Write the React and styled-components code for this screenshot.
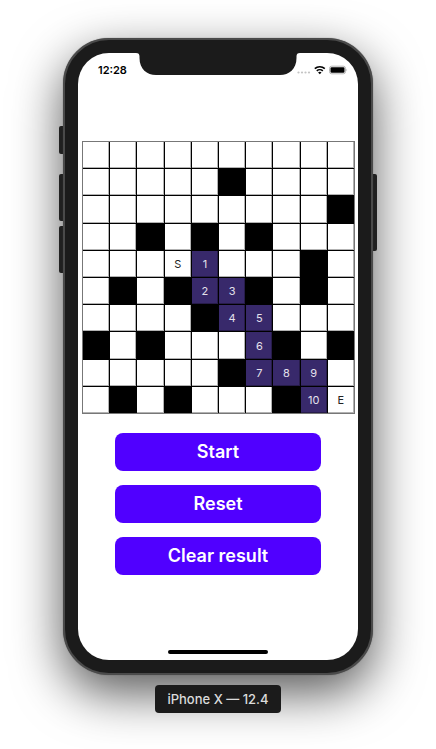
import React from "react";
import styled, { createGlobalStyle } from "styled-components";

const GlobalStyle = createGlobalStyle`
  *, *::before, *::after { box-sizing: border-box; }
  body {
    margin: 0;
    background: #fff;
    font-family: Inter, "Liberation Sans", sans-serif;
  }
`;

const Page = styled.main`
  display: flex;
  flex-direction: column;
  align-items: center;
  gap: 10px;
  padding: 38px 16px 36px;
  overflow: hidden;
`;

const Phone = styled.section`
  position: relative;
  width: 100%;
  max-width: 310px;
  padding: 13px;
  border: 2px solid #4a4a4a;
  border-radius: 46px;
  background: #1b1b1b;
  box-shadow: 0 0 1px #555, 0 18px 50px rgba(0, 0, 0, 0.66);
`;

const SideKey = styled.span`
  position: absolute;
  z-index: -1;
  top: ${(p) => p.$top}px;
  ${(p) => p.$side}: -6px;
  width: 8px;
  height: ${(p) => p.$length}px;
  border-radius: 2px;
  background: #2f2f2f;
`;

const Screen = styled.div`
  position: relative;
  display: flex;
  flex-direction: column;
  border-radius: 31px;
  background: #fff;
`;

const Notch = styled.svg`
  position: absolute;
  top: -1px;
  left: 50%;
  width: 164px;
  height: 23px;
  margin-left: -82px;
`;

const StatusBar = styled.header`
  display: flex;
  align-items: center;
  justify-content: space-between;
  height: 34px;
  padding: 0 10px 0 20px;
`;

const Clock = styled.time`
  font-size: 11px;
  line-height: 16px;
  font-weight: 600;
  color: #000;
`;

const StatusIcons = styled.svg`
  width: 51px;
  height: 10px;
`;

const Board = styled.div`
  display: grid;
  grid-template-columns: repeat(10, 1fr);
  gap: 1px;
  margin: 54px 3px 0 4px;
  border: 1px solid #777;
  background: #000;
`;

const fills = { open: "#fff", wall: "#000", path: "#38296b" };

const Cell = styled.div`
  display: flex;
  align-items: center;
  justify-content: center;
  aspect-ratio: 1;
  min-width: 0;
  background: ${(p) => fills[p.$kind]};
  box-shadow: inset -1px -1px rgba(0, 0, 0, 0.3);
  color: ${(p) => (p.$kind === "path" ? "#e4e1ec" : "#222")};
  font-size: 11px;
  line-height: 12px;
`;

const Actions = styled.div`
  display: flex;
  flex-direction: column;
  gap: 14px;
  margin: 19px 37px 0;
`;

const ActionButton = styled.button`
  height: 38px;
  padding: 0;
  border: 0;
  border-radius: 8px;
  background: #5000ff;
  color: #fff;
  font: inherit;
  font-size: 18px;
  line-height: 24px;
  font-weight: 600;
  cursor: pointer;
`;

const HomeBar = styled.div`
  width: 100px;
  height: 4px;
  margin: 75px auto 6px;
  border-radius: 2px;
  background: #000;
`;

const DeviceLabel = styled.p`
  position: relative;
  margin: 0;
  padding: 4px 12px;
  border-radius: 4px;
  background: #1b1b1b;
  color: #dcdcdc;
  font-size: 13px;
  line-height: 20px;
  font-weight: 500;
  white-space: nowrap;
`;

const Stage = styled.div`
  position: relative;
  z-index: 0;
  display: flex;
  justify-content: center;
  width: 100%;
`;

const WALL = "#";
const maze = [
  ["", "", "", "", "", "", "", "", "", ""],
  ["", "", "", "", "", WALL, "", "", "", ""],
  ["", "", "", "", "", "", "", "", "", WALL],
  ["", "", WALL, "", WALL, "", WALL, "", "", ""],
  ["", "", "", "S", "1", "", "", "", WALL, ""],
  ["", WALL, "", WALL, "2", "3", WALL, "", WALL, ""],
  ["", "", "", "", WALL, "4", "5", "", "", ""],
  [WALL, "", WALL, "", "", "", "6", WALL, "", WALL],
  ["", "", "", "", "", WALL, "7", "8", "9", ""],
  ["", WALL, "", WALL, "", "", "", WALL, "10", "E"],
];

const kindOf = (v) => (v === WALL ? "wall" : /^\d+$/.test(v) ? "path" : "open");

const keys = [
  { side: "left", top: 86, length: 28 },
  { side: "left", top: 134, length: 47 },
  { side: "left", top: 186, length: 47 },
  { side: "right", top: 134, length: 77 },
];

export default function App() {
  return (
    <>
      <GlobalStyle />
      <Page>
        <Stage>
          <Phone>
            {keys.map((k) => (
              <SideKey key={k.side + k.top} $side={k.side} $top={k.top} $length={k.length} />
            ))}
            <Screen>
              <Notch viewBox="0 0 164 23" aria-hidden="true">
                <path
                  d="M0 0H164V1C161.500 1 160.500 2 160.500 4.500V6C160.500 17 153 23 144 23H20C11 23 3.500 17 3.500 6V4.500C3.500 2 2.500 1 0 1Z"
                  fill="#1b1b1b"
                />
              </Notch>
              <StatusBar>
                <Clock>12:28</Clock>
                <StatusIcons viewBox="0 0 51 10" aria-hidden="true">
                  <g fill="#c4c4c4">
                    <circle cx="1.500" cy="7.500" r="1.100" />
                    <circle cx="5" cy="7.500" r="1.100" />
                    <circle cx="8.500" cy="7.500" r="1.100" />
                    <circle cx="12" cy="7.500" r="1.100" />
                  </g>
                  <g fill="none" stroke="#000" strokeWidth="1.600">
                    <path d="M17.800 3.700a7.200 7.200 0 0 1 10 0" />
                    <path d="M19.800 5.900a4.300 4.300 0 0 1 6 0" />
                  </g>
                  <path d="M22.800 9.200L21.100 7.500a2.500 2.500 0 0 1 3.400 0Z" fill="#000" />
                  <rect x="32.500" y="1.200" width="16" height="7.600" rx="2.200" fill="none" stroke="#b5b5b5" />
                  <rect x="33.500" y="2.200" width="14" height="5.600" rx="1.200" fill="#000" />
                  <path d="M49.500 3.500q1.400 1.500 0 3Z" fill="#aaa" />
                </StatusIcons>
              </StatusBar>
              <Board>
                {maze.flatMap((row, y) =>
                  row.map((v, x) => (
                    <Cell key={`${x}-${y}`} $kind={kindOf(v)}>
                      {v === WALL ? null : v}
                    </Cell>
                  ))
                )}
              </Board>
              <Actions>
                <ActionButton type="button">Start</ActionButton>
                <ActionButton type="button">Reset</ActionButton>
                <ActionButton type="button">Clear result</ActionButton>
              </Actions>
              <HomeBar />
            </Screen>
          </Phone>
        </Stage>
        <DeviceLabel>iPhone X — 12.4</DeviceLabel>
      </Page>
    </>
  );
}
